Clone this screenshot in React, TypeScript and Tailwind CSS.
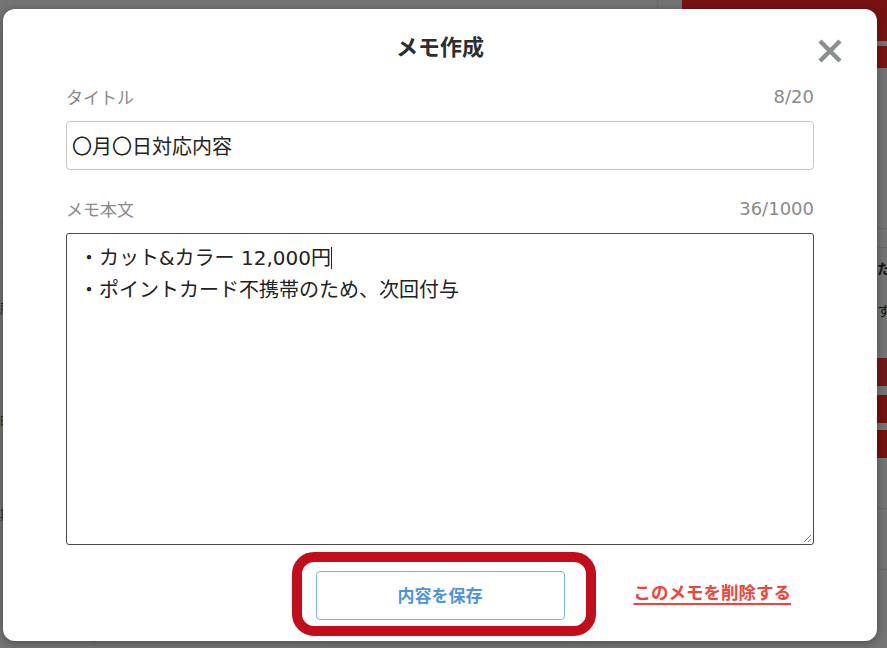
import React from "react";

const FONT = "font-['Noto_Sans_CJK_JP','Noto_Sans',sans-serif]";
const MIXED = "font-['DejaVu_Sans','Noto_Sans_CJK_JP',sans-serif]";

function CloseIcon() {
  return (
    <svg width="26" height="26" viewBox="0 0 26 26" aria-hidden="true">
      <path d="M3 3 L23 23 M23 3 L3 23" stroke="#8a8f8f" strokeWidth="4.5" fill="none" />
    </svg>
  );
}

function ResizeGrip() {
  return (
    <svg width="10" height="10" viewBox="0 0 10 10" aria-hidden="true">
      <path d="M9 2 L2 9 M9 6 L6 9" stroke="#7a7a7a" strokeWidth="1" fill="none" />
    </svg>
  );
}

function BackgroundPage() {
  return (
    <div className="flex h-full w-full">
      <div className="flex-1 flex flex-col">
        <div className="h-[8px] flex">
          <div className="flex-1" />
          <div className="w-px bg-[#6c6c6c] mr-[24px]" />
        </div>
        <div className="mt-[214px] h-px bg-[#6a6a6a]" />
        <div className="mt-[78px] text-[13px] text-[#2a2a2a] leading-none">所</div>
        <div className="mt-[100px] text-[13px] text-[#2a2a2a] leading-none">時</div>
        <div className="mt-[80px] text-[13px] text-[#2a2a2a] leading-none">期</div>
        <div className="mt-[110px] text-[11px] text-[#3c3c3c] pl-[88px] leading-none">8/15</div>
      </div>
      <div className="w-[205px] flex flex-col">
        <div className="h-[41px] bg-[#761414] rounded-bl-[6px]" />
        <div className="mt-[5px] h-[22px] bg-[#761414]" />
        <div className="mt-[160px] h-px bg-[#6a6a6a]" />
        <div className="mt-[18px] h-px bg-[#6a6a6a]" />
        <div className="mt-[10px] pl-[195px] text-[14px] font-bold text-[#111] leading-[20px] whitespace-nowrap">ただ</div>
        <div className="mt-[22px] pl-[195px] text-[14px] text-[#111] leading-[20px] whitespace-nowrap">す</div>
        <div className="mt-[38px] h-[28px] bg-[#6f1a1a]" />
        <div className="mt-[9px] h-[28px] bg-[#761010]" />
        <div className="mt-[7px] h-[28px] bg-[#761010]" />
        <div className="mt-[50px] h-px bg-[#6a6a6a]" />
        <div className="mt-[60px] h-px bg-[#6a6a6a]" />
      </div>
    </div>
  );
}

export default function App() {
  return (
    <div className={`relative w-[887px] h-[648px] overflow-hidden bg-[#747474] ${FONT}`}>
      <BackgroundPage />

      {/* memo dialog */}
      <div className="absolute left-[3px] top-[9px] w-[874px] h-[632px] bg-white rounded-[12px] shadow-[0_2px_8px_rgba(0,0,0,0.35)]">
        <div className="relative flex flex-col px-[63px] pt-[21px]">
          <h1 className="text-center text-[22px] leading-[30px] font-bold text-[#2e2e2e]">メモ作成</h1>
          <button className="absolute right-[34px] top-[29px]" aria-label="close">
            <CloseIcon />
          </button>

          <div className="mt-[25px] flex justify-between items-center text-[17px] leading-[24px] text-[#8a8a8a]">
            <span>タイトル</span>
            <span className={`${MIXED} text-[18px]`}>8/20</span>
          </div>
          <div className="mt-[12px] h-[49px] border border-[#c6c6c6] rounded-[4px] flex items-center pl-[5px] text-[20px] text-[#222]">
            〇月〇日対応内容
          </div>

          <div className="mt-[27px] flex justify-between items-center text-[17px] leading-[24px] text-[#8a8a8a]">
            <span>メモ本文</span>
            <span className={`${MIXED} text-[18px]`}>36/1000</span>
          </div>
          <div
            className={`relative mt-[12px] h-[312px] border-[1.5px] border-[#4a4a4a] rounded-[3px] pl-[12px] pt-[8px] text-[20px] leading-[32px] text-[#222] ${MIXED}`}
          >
            <div className="whitespace-pre">
              ・カット&amp;カラー 12,000円<span className="inline-block w-px h-[22px] bg-[#222] align-[-4px]" />
            </div>
            <div className="whitespace-pre">・ポイントカード不携帯のため、次回付与</div>
            <div className="absolute right-[1px] bottom-[1px] leading-none">
              <ResizeGrip />
            </div>
          </div>

          <div className="mt-[26px] grid grid-cols-[1fr_auto_1fr] items-center">
            <div />
            <div className="relative">
              <button className="w-[249px] h-[49px] border border-[#7fb2e6] rounded-[4px] bg-white text-[17px] leading-none pb-[3px] font-bold text-[#4e94dc]">
                内容を保存
              </button>
              <div className="absolute left-[-24px] top-[-19px] w-[304px] h-[84px] border-[10px] border-[#c10e1a] rounded-[22px] pointer-events-none" />
            </div>
            <div className="pl-[69px] pb-[6px]">
              <a className="text-[17.5px] font-bold text-[#f2443a] underline underline-offset-[4px] decoration-[1.5px] whitespace-nowrap">
                このメモを削除する
              </a>
            </div>
          </div>
        </div>
      </div>
    </div>
  );
}
